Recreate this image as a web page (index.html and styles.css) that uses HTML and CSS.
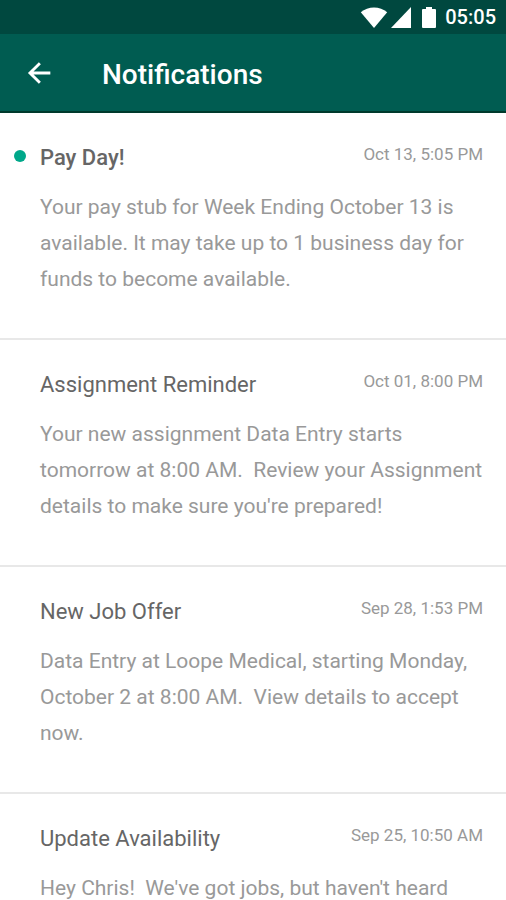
FILE: index.html
```html
<!DOCTYPE html>
<html lang="en">
<head>
<meta charset="UTF-8" />
<meta name="viewport" content="width=device-width, initial-scale=1" />
<title>Notifications</title>
<link rel="stylesheet" href="styles.css">
</head>
<body>
  <div class="status-bar">
    <svg class="icon-wifi" viewBox="0 0 28 21" aria-hidden="true"><path fill="currentColor" d="M14 21 .8 5.200C8-1.200 20-1.200 27.200 5.200z" /></svg>
    <svg class="icon-signal" viewBox="0 0 20 21" aria-hidden="true"><path fill="currentColor" d="M20 0v21H0z" /></svg>
    <svg class="icon-battery" viewBox="0 0 14 21" aria-hidden="true"><path fill="currentColor" d="M4 0h6v2h3q1 0 1 1v17q0 1-1 1H1q-1 0-1-1V3q0-1 1-1h3z" /></svg>
    <span class="clock">05:05</span>
  </div>
  <header class="app-bar">
    <button class="back-btn" type="button" aria-label="Back">
      <svg viewBox="0 0 24 24"><path fill="currentColor" d="M20.500 10.900H7.900l5.500-5.400L11.900 4l-8.200 8 8.200 8 1.500-1.500-5.500-5.400h12.600v-2.200z" /></svg>
    </button>
    <h1>Notifications</h1>
  </header>

  <main class="list">
    <article class="item unread">
      <div class="item-head">
        <h2>Pay Day!</h2>
        <time>Oct 13, 5:05 PM</time>
      </div>
      <p>Your pay stub for Week Ending October 13 is available. It may take up to 1 business day for funds to become available.</p>
    </article>
    <article class="item">
      <div class="item-head">
        <h2>Assignment Reminder</h2>
        <time>Oct 01, 8:00 PM</time>
      </div>
      <p>Your new assignment Data Entry starts tomorrow at 8:00 AM.&nbsp; Review your Assignment details to make sure you're prepared!</p>
    </article>
    <article class="item">
      <div class="item-head">
        <h2>New Job Offer</h2>
        <time>Sep 28, 1:53 PM</time>
      </div>
      <p>Data Entry at Loope Medical, starting Monday, October 2 at 8:00 AM.&nbsp; View details to accept now.</p>
    </article>
    <article class="item">
      <div class="item-head">
        <h2>Update Availability</h2>
        <time>Sep 25, 10:50 AM</time>
      </div>
      <p>Hey Chris!&nbsp; We've got jobs, but haven't heard</p>
    </article>
  </main>
</body>
</html>
```
FILE: styles.css
```css
:root {
  --status-color: #00483f;
  --primary-color: #005c51;
  --accent-color: #00a88a;
}

* {
  box-sizing: border-box;
}

body {
  margin: 0;
  height: 100vh;
  display: flex;
  flex-direction: column;
  overflow: hidden;
  background: #fff;
  font-family: Roboto, "Liberation Sans", sans-serif;
}

.status-bar {
  display: flex;
  flex-shrink: 0;
  align-items: center;
  justify-content: flex-end;
  height: 34px;
  padding-right: 10px;
  background: var(--status-color);
  color: #fff;
}
.status-bar svg {
  height: 21px;
}
.icon-wifi {
  width: 28px;
}
.icon-signal {
  width: 20px;
  margin-left: 3px;
}
.icon-battery {
  width: 14px;
  margin-left: 11px;
}
.clock {
  margin-left: 9px;
  font-size: 20px;
  font-weight: 500;
  line-height: 36px;
}

.app-bar {
  display: flex;
  flex-shrink: 0;
  align-items: center;
  height: 79px;
  padding-left: 23px;
  border-bottom: 2px solid #003a2c;
  background: var(--primary-color);
  color: #fff;
}
.back-btn {
  width: 32px;
  height: 32px;
  padding: 0;
  border: none;
  background: none;
  color: inherit;
  cursor: pointer;
}
.back-btn svg {
  display: block;
  width: 32px;
  height: 32px;
}
.app-bar h1 {
  margin: 0 0 0 47px;
  padding-top: 4px;
  font-size: 28px;
  font-weight: 500;
}

.list {
  flex: 1;
  overflow: hidden;
}
.item {
  padding: 28px 23px 41px 40px;
  border-bottom: 2px solid #e8e8e8;
}
.item-head {
  position: relative;
  display: flex;
  justify-content: space-between;
  line-height: 34px;
}
.item h2 {
  margin: 0;
  color: #666;
  font-size: 22px;
  font-weight: 400;
}
.item time {
  color: #999;
  font-size: 17px;
  line-height: 26px;
}
.item p {
  margin: 14px 0 0;
  color: #999;
  font-size: 21px;
  line-height: 36px;
}
.unread h2 {
  font-weight: 500;
}
.unread .item-head::before {
  content: "";
  position: absolute;
  top: 9px;
  left: -26px;
  width: 12px;
  height: 12px;
  border-radius: 50%;
  background: var(--accent-color);
}
```
